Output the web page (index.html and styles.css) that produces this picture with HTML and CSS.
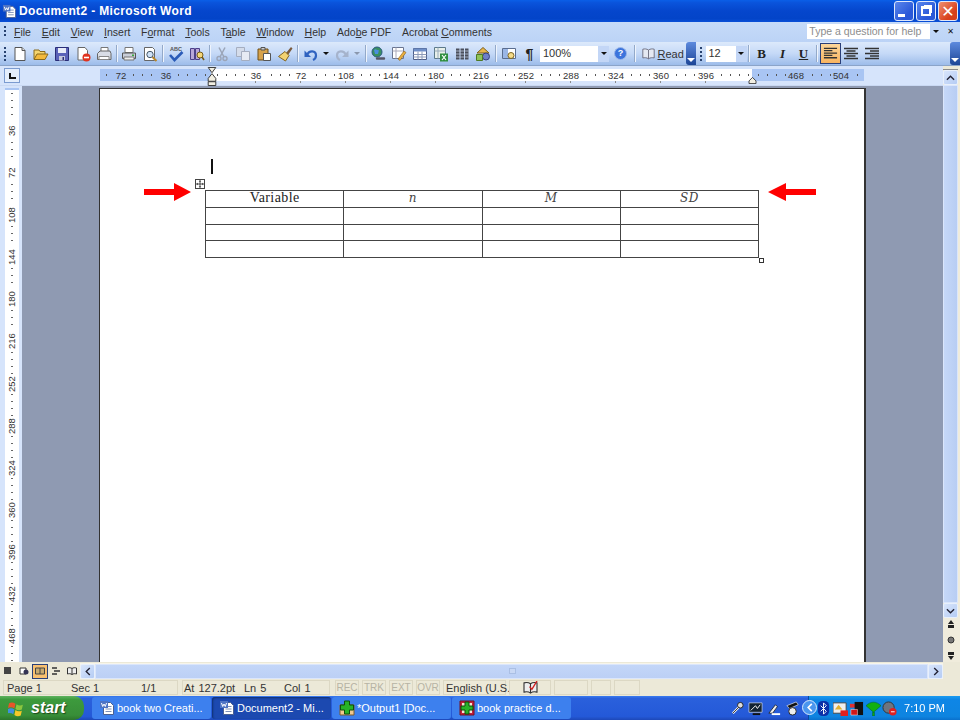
FILE: index.html
```html
<!DOCTYPE html>
<html lang="en">
<head>
  <meta charset="UTF-8" />
  <title>Document2 - Microsoft Word</title>
  <link rel="stylesheet" href="styles.css">
</head>
<body>
  <svg class="sprite" width="0" height="0">
    <symbol id="i-doc" viewBox="0 0 16 16"><path d="M3 1.500h7l3 3v10H3z" fill="#fff" stroke="#555"/><path d="M10 1.500v3h3" fill="#ddd" stroke="#555"/></symbol>
    <symbol id="i-open" viewBox="0 0 16 16"><path d="M1 13V4h5l1 1.500h5V8" fill="#f6d66f" stroke="#8a6a1c"/><path d="M1 13.500 4 8h11l-3 5.500z" fill="#f3b93c" stroke="#8a6a1c"/></symbol>
    <symbol id="i-save" viewBox="0 0 16 16"><path d="M1.500 1.500h13v13h-13z" fill="#5a62b8" stroke="#2a2e78"/><path d="M4 2h8v5H4z" fill="#e8ecf8"/><path d="M5 10h6v4.500H5z" fill="#c4c8dc"/><path d="M8.500 11h1.500v3H8.500z" fill="#2a2e78"/></symbol>
    <symbol id="i-perm" viewBox="0 0 16 16"><path d="M3 1.500h7l2.500 3V14H3z" fill="#fff" stroke="#666"/><circle cx="11.500" cy="11.500" r="4" fill="#e0331f"/><path d="M9 11.500h5" stroke="#fff" stroke-width="1.600"/></symbol>
    <symbol id="i-mail" viewBox="0 0 16 16"><path d="M5 1.500h7v5H5z" fill="#fff" stroke="#777"/><path d="M1.500 7.500 4 5h10l1 2.500v6h-13.500z" fill="#d9dde6" stroke="#666"/><path d="M3 10.500h10v3H3z" fill="#fff" stroke="#888"/></symbol>
    <symbol id="i-print" viewBox="0 0 16 16"><path d="M4 1.500h8v5H4z" fill="#fff" stroke="#777"/><path d="M1.500 7h13v5.500h-13z" fill="#c9ced9" stroke="#555"/><path d="M3 11h10v3H3z" fill="#eee" stroke="#777"/><path d="M11 8.500h2v1.500h-2z" fill="#3aa83a"/></symbol>
    <symbol id="i-preview" viewBox="0 0 16 16"><path d="M2.500 1.500h8l2 2v11H2.500z" fill="#fff" stroke="#666"/><circle cx="8" cy="8.500" r="3.200" fill="#cfe2f7" stroke="#456"/><path d="m10.500 11 4 4" stroke="#b8862a" stroke-width="2"/></symbol>
    <symbol id="i-research" viewBox="0 0 16 16"><path d="M1.500 2.500h4v11h-4zM6.500 2.500h4v11h-4z" fill="#b9a6d8" stroke="#4d3f88"/><circle cx="11" cy="9" r="3" fill="#f5d77a" stroke="#765c18"/><path d="m13 11 2 3" stroke="#765c18" stroke-width="1.600"/></symbol>
    <symbol id="i-cut" viewBox="0 0 16 16"><path d="M5 1.500 10 11M11 1.500 6 11" stroke="#9ba5b8" stroke-width="1.500"/><circle cx="5" cy="12.500" r="2" fill="none" stroke="#9ba5b8" stroke-width="1.400"/><circle cx="11" cy="12.500" r="2" fill="none" stroke="#9ba5b8" stroke-width="1.400"/></symbol>
    <symbol id="i-copy" viewBox="0 0 16 16"><path d="M1.500 1.500h8v9h-8z" fill="#d4dcea" stroke="#a5aec0"/><path d="M6.500 5.500h8v9h-8z" fill="#e6ebf4" stroke="#a5aec0"/></symbol>
    <symbol id="i-paste" viewBox="0 0 16 16"><path d="M2 3h10v11H2z" fill="#d6a24c" stroke="#6e4e17"/><path d="M5 1.500h4V4H5z" fill="#ccc" stroke="#555"/><path d="M7.500 7.500h7v7h-7z" fill="#fff" stroke="#555"/></symbol>
    <symbol id="i-brush" viewBox="0 0 16 16"><path d="m9 7 5-6 1.500 1.500L11 9z" fill="#7a5a3c"/><path d="M1.500 10.500 8 5.500l4 4-3.500 5.500z" fill="#f2d272" stroke="#826420"/></symbol>
    <symbol id="i-undo" viewBox="0 0 16 16"><path d="M4 9c2-5 9-5 9 .5 0 2-1 3.500-3 4.500" fill="none" stroke="#2f62c0" stroke-width="2.200"/><path d="M1.500 4.500v6.500h6.500z" fill="#2f62c0"/></symbol>
    <symbol id="i-redo" viewBox="0 0 16 16"><path d="M12 9C10 4 3 4 3 9.500c0 2 1 3.500 3 4.500" fill="none" stroke="#a5b3cc" stroke-width="2.200"/><path d="M14.500 4.500v6.500H8z" fill="#a5b3cc"/></symbol>
    <symbol id="i-link" viewBox="0 0 16 16"><circle cx="7" cy="6" r="5" fill="#3a8f60" stroke="#2c5a80"/><path d="M4 4c2-2 3 1 5 0l-1 4-3 0z" fill="#4b8fe0"/><path d="M7 12.500h3M11 12.500h3" stroke="#556" stroke-width="2.400" stroke-linecap="round"/></symbol>
    <symbol id="i-borders" viewBox="0 0 16 16"><path d="M1.500 1.500h11v11h-11z" fill="#fff" stroke="#6a7590"/><path d="M1.500 5h11M5 1.500v11" stroke="#aab"/><path d="m7 13 6-8 2 1.500-6 8z" fill="#e8b040" stroke="#8a5a18" stroke-width=".6"/></symbol>
    <symbol id="i-table" viewBox="0 0 16 16"><path d="M1.500 2.500h13v11h-13z" fill="#fff" stroke="#4d5e88"/><path d="M1.500 2.500h13v3h-13z" fill="#6f8fc8"/><path d="M1.500 8.500h13M1.500 11h13M6 5.500v8M10 5.500v8" stroke="#8c9ab8"/></symbol>
    <symbol id="i-excel" viewBox="0 0 16 16"><path d="M1.500 1.500h11v11h-11z" fill="#e8f0ea" stroke="#5d7a8a"/><path d="M1.500 5h11M5 1.500v11" stroke="#9ab"/><path d="M7 7.500h8v8H7z" fill="#2f8f3f"/><path d="m9 9 4 5M13 9l-4 5" stroke="#fff" stroke-width="1.200"/></symbol>
    <symbol id="i-cols" viewBox="0 0 16 16"><path d="M2 2.500h3.500v11H2zM6.500 2.500H10v11H6.500zM11 2.500h3.500v11H11z" fill="#4a4f5c"/><path d="M2 5h12.500M2 8h12.500M2 11h12.500" stroke="#cdd8ee" stroke-width=".7"/></symbol>
    <symbol id="i-draw" viewBox="0 0 16 16"><path d="M8 1.500 14 7H2z" fill="#e8b64a" stroke="#7d5f1d"/><circle cx="11" cy="10.500" r="3.500" fill="#6f80c8" stroke="#364080"/><path d="M1.500 8.500h6v6h-6z" fill="#8fc35a" stroke="#4f7a24"/></symbol>
    <symbol id="i-map" viewBox="0 0 16 16"><path d="M1.500 2.500h13v10h-13z" fill="#fff" stroke="#5a6d8e"/><path d="M2 3h5v9H2z" fill="#9ab6e6"/><circle cx="10" cy="9.500" r="3" fill="#f5dc8a" stroke="#7d6420"/></symbol>
    <symbol id="i-book" viewBox="0 0 16 16"><path d="M8 3.500C6 2 3.500 2 1.500 2.500v10c2-.5 4.500-.5 6.500 1 2-1.500 4.500-1.500 6.500-1v-10C12.500 2 10 2 8 3.500zM8 3.500v10" fill="#e5e9f2" stroke="#667"/></symbol>
    <symbol id="i-al" viewBox="0 0 16 16"><path d="M1 2.500h14M1 5h9M1 7.500h14M1 10h9M1 12.500h14" stroke="#333" stroke-width="1.400"/></symbol>
    <symbol id="i-ac" viewBox="0 0 16 16"><path d="M1 2.500h14M3.500 5h9M1 7.500h14M3.500 10h9M1 12.500h14" stroke="#333" stroke-width="1.400"/></symbol>
    <symbol id="i-ar" viewBox="0 0 16 16"><path d="M1 2.500h14M6 5h9M1 7.500h14M6 10h9M1 12.500h14" stroke="#333" stroke-width="1.400"/></symbol>
    <symbol id="i-word" viewBox="0 0 16 16"><path d="M4.500 2.500h7l3 3v9h-10z" fill="#fff" stroke="#4a5f90"/><path d="M6.500 6.500h6M6.500 9h6M6.500 11.500h6" stroke="#7d90b8"/><path d="M1 1h8v7H1z" fill="#4e74c4"/><path d="m2.500 3 1.200 3.500L5 4l1.300 2.500L7.500 3" fill="none" stroke="#fff"/></symbol>
    <symbol id="i-plus" viewBox="0 0 16 16"><path d="M1 5h14v10H1z" fill="#f0c890" stroke="#7a5a2c"/><path d="M5.500 1h5v4h4v5h-4v4h-5v-4h-4V5h4z" fill="#27b327" stroke="#0d4f0d"/></symbol>
    <symbol id="i-plusred" viewBox="0 0 16 16"><path d="M1 1h14v14H1z" fill="#c81f3c" stroke="#701020"/><path d="M3 3h10v10H3z" fill="#f2e8d8"/><path d="M6 2h4v4h4v4h-4v4H6v-4H2V6h4z" fill="#27b327" stroke="#0d4f0d"/></symbol>
  </svg>

  <div class="screen">
    <header class="titlebar">
      <svg class="title-icon"><use href="#i-word"/></svg>
      <span class="title-text">Document2 - Microsoft Word</span>
      <div class="win-btns">
        <span class="win-btn"><i class="win-min"></i></span>
        <span class="win-btn"><i class="win-max"></i></span>
        <span class="win-btn win-close">&#x2715;</span>
      </div>
    </header>

    <nav class="menubar">
      <span class="grip"></span>
      <ul class="menu">
        <li><u>F</u>ile</li>
        <li><u>E</u>dit</li>
        <li><u>V</u>iew</li>
        <li><u>I</u>nsert</li>
        <li>F<u>o</u>rmat</li>
        <li><u>T</u>ools</li>
        <li>T<u>a</u>ble</li>
        <li><u>W</u>indow</li>
        <li><u>H</u>elp</li>
        <li>Ado<u>b</u>e PDF</li>
        <li>Acrobat <u>C</u>omments</li>
      </ul>
      <div class="helpbox">Type a question for help</div>
      <span class="arrow-down help-arrow"></span>
      <span class="doc-close">&#x2715;</span>
    </nav>

    <div class="toolbar">
      <span class="grip"></span>
      <svg class="tb"><use href="#i-doc"/></svg>
      <svg class="tb"><use href="#i-open"/></svg>
      <svg class="tb"><use href="#i-save"/></svg>
      <svg class="tb"><use href="#i-perm"/></svg>
      <svg class="tb"><use href="#i-mail"/></svg>
      <span class="sep"></span>
      <svg class="tb"><use href="#i-print"/></svg>
      <svg class="tb"><use href="#i-preview"/></svg>
      <span class="sep"></span>
      <svg class="tb" viewBox="0 0 16 16"><path d="m2 9 4.500 5L14.500 6" fill="none" stroke="#2a5bb8" stroke-width="2.600"/><text x="8" y="5" text-anchor="middle" font-family="Liberation Sans" font-size="5.500" font-weight="bold" fill="#555">ABC</text></svg>
      <svg class="tb"><use href="#i-research"/></svg>
      <span class="sep"></span>
      <svg class="tb"><use href="#i-cut"/></svg>
      <svg class="tb"><use href="#i-copy"/></svg>
      <svg class="tb"><use href="#i-paste"/></svg>
      <svg class="tb"><use href="#i-brush"/></svg>
      <span class="sep"></span>
      <svg class="tb"><use href="#i-undo"/></svg>
      <span class="arrow-down tb-arrow"></span>
      <svg class="tb"><use href="#i-redo"/></svg>
      <span class="arrow-down tb-arrow off"></span>
      <span class="sep"></span>
      <svg class="tb"><use href="#i-link"/></svg>
      <svg class="tb"><use href="#i-borders"/></svg>
      <svg class="tb"><use href="#i-table"/></svg>
      <svg class="tb"><use href="#i-excel"/></svg>
      <svg class="tb"><use href="#i-cols"/></svg>
      <svg class="tb"><use href="#i-draw"/></svg>
      <span class="sep"></span>
      <svg class="tb"><use href="#i-map"/></svg>
      <span class="pilcrow">&para;</span>
      <div class="combo zoom-combo"><span>100%</span><b><i class="arrow-down"></i></b></div>
      <span class="help-btn">?</span>
      <span class="sep"></span>
      <span class="read"><svg class="read-ico"><use href="#i-book"/></svg><span><u>R</u>ead</span></span>
      <span class="chevron"><i class="arrow-down"></i></span>
      <span class="grip grip-2"></span>
      <div class="combo size-combo"><span>12</span><b><i class="arrow-down"></i></b></div>
      <span class="sep"></span>
      <span class="fmt fmt-b">B</span>
      <span class="fmt fmt-i">I</span>
      <span class="fmt fmt-u">U</span>
      <span class="sep"></span>
      <span class="align-on"><svg class="al"><use href="#i-al"/></svg></span>
      <svg class="tb"><use href="#i-ac"/></svg>
      <svg class="tb"><use href="#i-ar"/></svg>
      <span class="chevron chevron-end"><i class="arrow-down"></i></span>
    </div>

    <div class="ruler-row">
      <div class="tab-stop"><i></i></div>
      <div class="hruler">
        <div class="hruler-band">
          <div class="zone zone-left">
            <span class="cell"><b>72</b></span>
            <span class="cell"><b>36</b></span>
          </div>
          <div class="zone zone-mid">
            <span class="cell"><b>36</b></span>
            <span class="cell"><b>72</b></span>
            <span class="cell"><b>108</b></span>
            <span class="cell"><b>144</b></span>
            <span class="cell"><b>180</b></span>
            <span class="cell"><b>216</b></span>
            <span class="cell"><b>252</b></span>
            <span class="cell"><b>288</b></span>
            <span class="cell"><b>324</b></span>
            <span class="cell"><b>360</b></span>
            <span class="cell"><b>396</b></span>
          </div>
          <div class="zone zone-right">
            <span class="cell"><b>468</b></span>
            <span class="cell"><b>504</b></span>
          </div>
        </div>
        <div class="hruler-ticks"></div>
        <svg class="indent indent-l" viewBox="0 0 10 20"><path d="M1 .5h8L5 6zM5 7l4 5v3H1v-3z" fill="#f2efe2" stroke="#333"/><path d="M1 15.500h8v4H1z" fill="#f2efe2" stroke="#333"/></svg>
        <svg class="indent indent-r" viewBox="0 0 10 8"><path d="m5 .5 4 4v3H1v-3z" fill="#f2efe2" stroke="#333"/></svg>
      </div>
    </div>

    <div class="main">
      <div class="vruler">
        <div class="vruler-band">
          <span>36</span><span>72</span><span>108</span><span>144</span><span>180</span><span>216</span><span>252</span><span>288</span><span>324</span><span>360</span><span>396</span><span>432</span><span>468</span>
        </div>
      </div>
      <div class="workspace">
        <div class="page">
          <div class="caret"></div>
          <div class="table-wrap">
            <span class="move-handle"><svg viewBox="0 0 10 10"><path d="M5 1v8M1 5h8" stroke="#222"/><path d="m5 0 1.500 2h-3zM5 10l1.500-2h-3zM0 5l2-1.500v3zM10 5 8 3.500v3z" fill="#222"/></svg></span>
            <table class="doc-table">
              <tr><th>Variable</th><th class="stat">n</th><th class="stat">M</th><th class="stat">SD</th></tr>
              <tr><td></td><td></td><td></td><td></td></tr>
              <tr><td></td><td></td><td></td><td></td></tr>
              <tr><td></td><td></td><td></td><td></td></tr>
            </table>
            <span class="resize-handle"></span>
          </div>
          <svg class="red-arrow arrow-l" viewBox="0 0 48 18"><path d="M0 6h30V0l17 9-17 9v-6H0z" fill="#f00"/></svg>
          <svg class="red-arrow arrow-r" viewBox="0 0 48 18"><path d="M48 6H18V0L0 9l18 9v-6h30z" fill="#f00"/></svg>
        </div>
      </div>
      <aside class="vscroll">
        <span class="split"></span>
        <span class="sb-btn"><svg viewBox="0 0 10 6"><path d="m1 5 4-4 4 4" fill="none" stroke="#223" stroke-width="1.500"/></svg></span>
        <span class="sb-track"></span>
        <span class="sb-btn"><svg viewBox="0 0 10 6"><path d="m1 1 4 4 4-4" fill="none" stroke="#223" stroke-width="1.500"/></svg></span>
        <div class="browse">
          <svg viewBox="0 0 8 10"><path d="m4 0 3 4H1zM1 5h6v3H1z" fill="#222"/></svg>
          <svg viewBox="0 0 8 10"><circle cx="4" cy="5" r="3" fill="#777" stroke="#333"/></svg>
          <svg viewBox="0 0 8 10"><path d="M1 2h6v3H1zM1 6h6l-3 4z" fill="#222"/></svg>
        </div>
      </aside>
    </div>

    <div class="hscroll">
      <div class="views">
        <span class="view"><svg viewBox="0 0 10 10"><path d="M1 1h7v7H1z" fill="#444"/></svg></span>
        <span class="view"><svg viewBox="0 0 10 10"><path d="M1 2h6v6H1z" fill="#fff" stroke="#333"/><circle cx="7" cy="6" r="2.500" fill="#335"/></svg></span>
        <span class="view view-on"><svg viewBox="0 0 10 10"><path d="M.5 2h9v6h-9z" fill="#c9ab70" stroke="#444"/><path d="M5 2v6" stroke="#444"/></svg></span>
        <span class="view"><svg viewBox="0 0 10 10"><path d="M1 2h5M3 5h6M1 8h5" stroke="#333" stroke-width="1.400"/></svg></span>
        <span class="view"><svg viewBox="0 0 10 10"><path d="M5 2.500C3.500 1.500 2 1.500 .5 2v6c1.500-.5 3-.5 4.500.5 1.500-1 3-1 4.500-.5V2C8 1.500 6.500 1.500 5 2.500zM5 2.500v6" fill="#eee" stroke="#333"/></svg></span>
      </div>
      <span class="sb-btn h"><svg viewBox="0 0 6 10"><path d="M5 1 1 5l4 4" fill="none" stroke="#223" stroke-width="1.500"/></svg></span>
      <span class="h-track"><i></i></span>
      <span class="sb-btn h"><svg viewBox="0 0 6 10"><path d="m1 1 4 4-4 4" fill="none" stroke="#223" stroke-width="1.500"/></svg></span>
      <span class="h-end"></span>
    </div>

    <div class="statusbar">
      <div class="st st-page"><span>Page 1</span><span>Sec 1</span><span>1/1</span></div>
      <div class="st st-pos"><span>At 127.2pt</span><span>Ln 5</span><span>Col 1</span></div>
      <div class="st st-mode">REC</div>
      <div class="st st-mode">TRK</div>
      <div class="st st-mode">EXT</div>
      <div class="st st-mode">OVR</div>
      <div class="st st-lang">English (U.S.</div>
      <div class="st st-spell"><svg viewBox="0 0 16 14"><path d="M8 3C6 1.500 3 1.500 1 2v10c2-.5 5-.5 7 1 2-1.500 5-1.500 7-1V2c-2-.5-5-.5-7 1zM8 3v10" fill="#eee" stroke="#333" stroke-width="1.200"/><path d="m7 6 2.500 3L15 0" fill="none" stroke="#d02020" stroke-width="1.500"/></svg></div>
      <div class="st st-e1"></div>
      <div class="st st-e2"></div>
      <div class="st st-e3"></div>
    </div>

    <footer class="taskbar">
      <div class="start">
        <svg class="flag" viewBox="0 0 16 16"><path d="M1 3c2-1 4-1 6 .5L6 8C4 6.500 2 6.500 0 7.500z" fill="#e8552a"/><path d="M8 4c2 1.500 4 1.500 6 .5L13 9c-2 1-4 1-6-.5z" fill="#8cc63f"/><path d="M0 8.500c2-1 4-1 6 .5l-1 4.500c-2-1.500-4-1.500-6-.5z" fill="#3f8fe0"/><path d="M7 9.500c2 1.500 4 1.500 6 .5l-1 4.500c-2 1-4 1-6-.5z" fill="#f7c928"/></svg>
        <span>start</span>
      </div>
      <div class="tasks">
        <div class="task"><svg><use href="#i-word"/></svg><span>book two Creati...</span></div>
        <div class="task task-on"><svg><use href="#i-word"/></svg><span>Document2 - Mi...</span></div>
        <div class="task"><svg><use href="#i-plus"/></svg><span>*Output1 [Doc...</span></div>
        <div class="task"><svg><use href="#i-plusred"/></svg><span>book practice d...</span></div>
      </div>
      <div class="quick">
        <svg viewBox="0 0 16 16"><path d="m3 13 7-7" stroke="#eee" stroke-width="2.400"/><path d="m3 13 7-7" stroke="#333" stroke-width="1"/><circle cx="11" cy="4.500" r="3" fill="#ddd" stroke="#222"/></svg>
        <svg viewBox="0 0 16 16"><path d="M1 2h14v10H1z" fill="#123" stroke="#fff" stroke-width=".6"/><path d="M3 10 8 5l2 3 3-4" fill="none" stroke="#fff"/><path d="M5 14h8" stroke="#111" stroke-width="2"/></svg>
        <svg viewBox="0 0 16 16"><path d="m2 13 7-9 2 2-5 7z" fill="#eee" stroke="#111" stroke-width=".8"/><path d="M5 14h9" stroke="#fff" stroke-width="2"/></svg>
        <svg viewBox="0 0 16 16"><path d="M2 5 12 1l2 3L5 8z" fill="#111" stroke="#eee" stroke-width=".7"/><circle cx="8" cy="11" r="4" fill="#eee" stroke="#222"/></svg>
      </div>
      <div class="tray">
        <span class="tray-toggle"><svg viewBox="0 0 6 10"><path d="M5 1 1 5l4 4" fill="none" stroke="#fff" stroke-width="1.800"/></svg></span>
        <svg viewBox="0 0 16 16"><rect x="2" width="12" height="16" rx="5" fill="#0a2fa8"/><path d="m5 5 6 6-3 3V2l3 3-6 6" fill="none" stroke="#fff"/></svg>
        <svg viewBox="0 0 16 16"><path d="M0 2h14v11H0z" fill="#eee" stroke="#444"/><path d="M2 9 6 4l4 5z" fill="#e0b030"/><path d="M8 10h8v6H8z" fill="#e02020"/></svg>
        <svg viewBox="0 0 16 16"><path d="M1 3h9v4H1z" fill="#e03030"/><path d="M6 1h9v14H6z" fill="#111"/><path d="M2 9h7v6H2z" fill="#d01818" stroke="#fff" stroke-width=".5"/></svg>
        <svg viewBox="0 0 16 16"><path d="M0 5c5-5 11-5 16 0l-8 7zM7 12h2v4H7z" fill="#12b012" stroke="#063" stroke-width=".6"/></svg>
        <svg viewBox="0 0 16 16"><circle cx="7" cy="7" r="6" fill="#6e7480" stroke="#333"/><circle cx="11.500" cy="11.500" r="4" fill="#e02020"/><path d="M9.500 11.500h4" stroke="#fff"/></svg>
        <span class="clock">7:10 PM</span>
      </div>
    </footer>
  </div>
</body>
</html>
```

FILE: styles.css
```css
* {
  box-sizing: border-box;
}

html, body {
  margin: 0;
  padding: 0;
  background: #fff;
}

.sprite {
  position: absolute;
}

.screen {
  width: 960px;
  height: 720px;
  overflow: hidden;
  display: flex;
  flex-direction: column;
  font-family: "Liberation Sans", Arial, sans-serif;
  font-size: 11px;
  color: #222;
  filter: blur(0.35px);
}

/* title bar */
.titlebar {
  height: 22px;
  display: flex;
  align-items: center;
  padding: 0 2px;
  background: linear-gradient(#0a5fe8 0%, #0a54dc 12%, #0546cc 50%, #0344c8 85%, #0a50d8 100%);
}

.title-icon {
  width: 15px;
  height: 15px;
  margin-right: 2px;
}

.title-text {
  font-weight: bold;
  font-size: 12px;
  color: #fff;
  letter-spacing: 0.35px;
}

.win-btns {
  margin-left: auto;
  display: flex;
  gap: 2px;
}

.win-btn {
  width: 20px;
  height: 20px;
  border: 1px solid #dfe8fa;
  border-radius: 3px;
  background: linear-gradient(135deg, #5a86ec, #2a58d8 70%);
  display: flex;
  align-items: center;
  justify-content: center;
  color: #fff;
}

.win-min {
  width: 7px;
  height: 3px;
  background: #fff;
  margin: 9px 6px 0 0;
}

.win-max {
  width: 10px;
  height: 10px;
  border: 2px solid #fff;
  border-top-width: 3px;
  box-shadow: 2px -2px 0 -1px #fff;
}

.win-close {
  background: linear-gradient(135deg, #f09070, #d8401c 70%);
  font-size: 16px;
  font-weight: bold;
  font-family: "DejaVu Sans", sans-serif;
}

/* menu */
.menubar {
  height: 20px;
  display: flex;
  align-items: center;
  background: linear-gradient(#c6dbf8, #bcd3f6);
  padding: 0 0 1px 4px;
  font-size: 10.500px;
}

.grip {
  width: 2px;
  height: 12px;
  flex: none;
  background: repeating-linear-gradient(#27416f 0 2px, transparent 2px 4px);
}

.menu {
  list-style: none;
  display: flex;
  margin: 0;
  padding: 0 0 0 8px;
  gap: 10.800px;
  color: #333;
  white-space: nowrap;
}

.helpbox {
  margin-left: auto;
  width: 123px;
  height: 15px;
  background: #fff;
  color: #8d8d8d;
  line-height: 14px;
  padding-left: 2px;
  white-space: nowrap;
}

.arrow-down {
  display: inline-block;
  width: 0;
  height: 0;
  border: 3px solid transparent;
  border-top: 3px solid #111;
  border-bottom: 0;
}

.help-arrow {
  margin-left: 3px;
}

.doc-close {
  margin: 0 6px 0 8px;
  font-size: 8px;
  font-weight: bold;
  color: #111;
  font-family: "DejaVu Sans", sans-serif;
}

/* standard + formatting toolbar, they share one row */
.toolbar {
  height: 24px;
  display: flex;
  align-items: center;
  padding-left: 4px;
  background: linear-gradient(#dce9fb 0%, #c5d9f7 50%, #9dbcea 100%);
  border-bottom: 1px solid #8ba4c9;
}

.tb {
  width: 16px;
  height: 16px;
  margin: 0 2.500px;
  flex: none;
}

.toolbar > .grip {
  margin-right: 3px;
  height: 14px;
}

.toolbar > .grip-2 {
  margin: 0 4px;
}

.sep {
  width: 1px;
  height: 17px;
  flex: none;
  margin: 0 2px 0 1.500px;
  background: #93a9c9;
  box-shadow: 1px 0 0 #eef4fd;
}

.tb-arrow {
  margin: 0 2px 0 2px;
  flex: none;
}

.tb-arrow.off {
  border-top-color: #8a97ad;
  margin-right: 3px;
}

.pilcrow {
  width: 21px;
  text-align: center;
  font-size: 14px;
  font-weight: bold;
  color: #222;
  flex: none;
}

.combo {
  display: flex;
  height: 16px;
  background: #fff;
  flex: none;
  line-height: 15px;
  padding-left: 3px;
  color: #333;
}

.combo b {
  width: 11px;
  margin-left: auto;
  background: #c3d6f6;
  display: flex;
  align-items: center;
  justify-content: center;
}

.zoom-combo {
  width: 69px;
}

.size-combo {
  width: 41px;
}

.help-btn {
  width: 13px;
  height: 13px;
  margin: 0 5px;
  flex: none;
  border-radius: 50%;
  background: #3c74dc;
  border: 1px solid #9ab6e8;
  color: #fff;
  font-size: 9px;
  font-weight: bold;
  line-height: 11px;
  text-align: center;
}

.read {
  display: flex;
  align-items: center;
  gap: 2px;
  width: 49px;
  padding-left: 4px;
  flex: none;
  color: #333;
}

.read-ico {
  width: 15px;
  height: 14px;
  flex: none;
}

.chevron {
  width: 10px;
  height: 23px;
  flex: none;
  background: linear-gradient(#5d8ade, #1c4596);
  border-radius: 3px 0 0 3px;
  display: flex;
  align-items: flex-end;
  justify-content: center;
  padding-bottom: 3px;
}

.chevron .arrow-down {
  border-top-color: #fff;
  border-left-width: 4px;
  border-right-width: 4px;
  border-top-width: 4px;
}

.chevron-end {
  margin-left: auto;
}

.fmt {
  width: 21px;
  flex: none;
  text-align: center;
  font-family: "Liberation Serif", serif;
  font-size: 13px;
  font-weight: bold;
  color: #222;
}

.fmt-i {
  font-style: italic;
}

.fmt-u {
  text-decoration: underline;
}

.align-on {
  width: 21px;
  height: 21px;
  margin-left: 1px;
  flex: none;
  border: 1px solid #2a3f78;
  background: linear-gradient(#fcd69a, #f8b460);
  display: flex;
  align-items: center;
  justify-content: center;
}

.al {
  width: 15px;
  height: 15px;
}

/* rulers */
.ruler-row {
  height: 20px;
  display: flex;
  background: #d6e4fb;
  border-bottom: 1px solid #c9d8f2;
  padding-left: 4px;
}

.tab-stop {
  width: 16px;
  height: 15px;
  margin-top: 2px;
  border: 1px solid #7b9bd0;
  background: #e4eefc;
  flex: none;
  display: flex;
  align-items: center;
  justify-content: center;
}

.tab-stop i {
  width: 7px;
  height: 6px;
  border-left: 2px solid #111;
  border-bottom: 2px solid #111;
}

.hruler {
  position: relative;
  margin-left: 80px;
  width: 764px;
  padding-top: 3px;
}

.hruler-band {
  height: 12px;
  display: flex;
  font-size: 9.500px;
  line-height: 13px;
  color: #333;
}

.zone {
  display: flex;
  height: 12px;
  background-image: radial-gradient(circle, #555 0.6px, transparent 1px);
  background-size: 9px 12px;
  background-position: 2px 0;
  overflow: hidden;
}

.zone-left {
  width: 111px;
  background-color: #a9c5f3;
}

.zone-mid {
  width: 541px;
  padding-left: 22.500px;
  background-color: #fff;
}

.zone-right {
  width: 112px;
  padding-left: 21.500px;
  background-color: #a9c5f3;
}

.zone-left .cell:first-child {
  margin-left: -1.500px;
}

.cell {
  width: 45px;
  flex: none;
  text-align: center;
}

.cell b {
  font-weight: normal;
  padding: 0 2px;
}

.zone-left b, .zone-right b {
  background: #a9c5f3;
}

.zone-mid b {
  background: #fff;
}

.hruler-ticks {
  height: 2px;
  margin-left: 111px;
  width: 500px;
  background: repeating-linear-gradient(90deg, transparent 0 44px, #8a8a8a 44px 45px);
}

.indent {
  position: absolute;
}

.indent-l {
  left: 107px;
  top: 1px;
  width: 10px;
  height: 19px;
}

.indent-r {
  left: 648px;
  top: 11px;
  width: 9px;
  height: 7px;
}

.main {
  flex: 1;
  min-height: 0;
  display: flex;
}

.vruler {
  width: 22px;
  flex: none;
  background: #d6e4fb;
  padding: 2px 3px 0 5px;
}

.vruler-band {
  height: 100%;
  overflow: hidden;
  background-color: #fff;
  border-top: 2px solid #a9c5f3;
  background-image: radial-gradient(circle, #666 0.6px, transparent 1px);
  background-size: 14px 7px;
  color: #333;
  font-size: 9.500px;
  display: flex;
  flex-direction: column;
  align-items: center;
  padding-top: 31px;
}

.vruler-band span {
  height: 20px;
  width: 14px;
  margin-bottom: 22.100px;
  flex: none;
  background: #fff;
  writing-mode: vertical-rl;
  transform: rotate(180deg);
  display: flex;
  align-items: center;
  justify-content: center;
  line-height: 14px;
}

.workspace {
  flex: 1;
  min-width: 0;
  background: #8f9ab2;
  padding: 2px 0 0 77px;
}

.page {
  position: relative;
  width: 767px;
  height: 100%;
  background: #fff;
  border: 1px solid #333;
  border-width: 1px 2px 0 1px;
  padding: 70px 0 0 105px;
}

.caret {
  width: 2px;
  height: 15px;
  background: #111;
  margin-left: 6px;
}

.table-wrap {
  position: relative;
  width: 555px;
  margin-top: 16px;
}

.doc-table {
  border-collapse: collapse;
  table-layout: fixed;
  width: 554px;
  font-family: "Liberation Serif", serif;
  font-size: 14px;
  line-height: 14px;
  color: #222;
}

.doc-table th, .doc-table td {
  border: 1px solid #444;
  height: 16.700px;
  padding: 0 0 2px;
  font-weight: normal;
  text-align: center;
  letter-spacing: 0.4px;
}

.doc-table .stat {
  font-style: italic;
  font-family: "DejaVu Serif", serif;
  font-size: 12px;
  color: #444;
}

.move-handle {
  position: absolute;
  left: -10px;
  top: -11px;
  width: 10px;
  height: 10px;
  border: 1px solid #444;
  background: #fff;
  display: flex;
}

.move-handle svg {
  width: 8px;
  height: 8px;
}

.resize-handle {
  position: absolute;
  right: -4px;
  bottom: -5px;
  width: 5px;
  height: 5px;
  border: 1px solid #333;
  background: #fff;
}

.red-arrow {
  position: absolute;
  width: 48px;
  height: 18px;
}

.arrow-l {
  left: 44px;
  top: 94px;
}

.arrow-r {
  left: 668px;
  top: 94px;
}

/* scrollbars */
.vscroll {
  margin-top: -20px;
  width: 17px;
  flex: none;
  display: flex;
  flex-direction: column;
  align-items: flex-start;
  background: #f0ecdc;
  position: relative;
}

.split {
  height: 4px;
  width: 15px;
  background: #ece9d8;
  border-bottom: 1px solid #8a8a8a;
  flex: none;
}

.sb-btn {
  width: 15px;
  height: 15px;
  flex: none;
  background: linear-gradient(135deg, #d8e5fb, #b5ccf4);
  border: 1px solid #e8f0fc;
  border-radius: 2px;
  display: flex;
  align-items: center;
  justify-content: center;
}

.sb-btn svg {
  width: 9px;
  height: 6px;
}

.sb-btn.h svg {
  width: 6px;
  height: 9px;
}

.sb-track {
  flex: 1;
  width: 15px;
  background: linear-gradient(90deg, #c6d8f8, #b8cdf3);
  border: 1px solid #dbe6fb;
}

.browse {
  height: 44px;
  width: 15px;
  flex: none;
  display: flex;
  flex-direction: column;
  align-items: center;
  justify-content: space-around;
}

.browse svg {
  width: 8px;
  height: 10px;
}

.hscroll {
  height: 17px;
  display: flex;
  align-items: center;
  background: #f7f5ea;
  border-top: 1px solid #ece9d8;
}

.views {
  width: 80px;
  flex: none;
  display: flex;
  align-items: center;
  background: #ece9d8;
  height: 16px;
}

.view {
  width: 16px;
  height: 15px;
  flex: none;
  display: flex;
  align-items: center;
  justify-content: center;
}

.view svg {
  width: 10px;
  height: 10px;
}

.view-on {
  background: #f8c070;
  border: 1px solid #2a3f78;
}

.h-track {
  flex: 1;
  height: 15px;
  background: linear-gradient(#c3d6f8, #bcd0f5);
  border: 1px solid #dbe6fb;
  display: flex;
  align-items: center;
  justify-content: center;
}

.h-track i {
  width: 7px;
  height: 6px;
  background: #c9d8f4;
  border: 1px solid #aabfe4;
  margin-left: 2px;
}

.h-end {
  width: 17px;
  height: 16px;
  flex: none;
  background: #ece9d8;
}

.statusbar {
  height: 17px;
  display: flex;
  gap: 3px;
  padding: 1px 0 0 3px;
  background: #ece9d8;
  color: #333;
  line-height: 14px;
}

.st {
  height: 15px;
  border: 1px solid #dcd8c4;
  flex: none;
  white-space: nowrap;
  display: flex;
}

.st-page {
  width: 175px;
  padding-left: 3px;
  margin-right: 1px;
}

.st-page span:nth-child(1) { width: 64px; }
.st-page span:nth-child(2) { width: 70px; }

.st-pos {
  width: 148px;
  padding-left: 1px;
  margin-right: 2px;
  word-spacing: 1px;
}

.st-pos span:nth-child(1) { width: 60px; }
.st-pos span:nth-child(2) { width: 40px; }

.st-mode {
  width: 24px;
  color: #b6b3a4;
  justify-content: center;
  font-size: 10px;
}

.st-lang {
  width: 63px;
  padding-left: 2px;
}

.st-spell {
  width: 42px;
  justify-content: center;
}

.st-spell svg {
  width: 15px;
  height: 13px;
}

.st-e1 { width: 34px; }
.st-e2 { width: 20px; }
.st-e3 { width: 26px; }

.taskbar {
  height: 24px;
  flex: none;
  display: flex;
  align-items: stretch;
  background: linear-gradient(#3a7cf0 0%, #2a60dc 10%, #2459d8 85%, #1d48b8 100%);
  color: #fff;
}

.start {
  width: 84px;
  flex: none;
  display: flex;
  align-items: center;
  padding-left: 8px;
  gap: 6px;
  background: linear-gradient(#5fb35f 0%, #3d9a3d 15%, #388e38 80%, #2c752c 100%);
  border-radius: 0 10px 10px 0;
  font-style: italic;
  font-weight: bold;
  font-size: 16px;
  text-shadow: 1px 1px 1px #1c4a1c;
}

.flag {
  width: 17px;
  height: 17px;
}

.tasks {
  display: flex;
  gap: 1px;
  margin-left: 8px;
  align-items: center;
}

.task {
  width: 119px;
  height: 22px;
  display: flex;
  align-items: center;
  gap: 2px;
  padding-left: 7px;
  border-radius: 3px;
  background: #3d80ee;
  white-space: nowrap;
  overflow: hidden;
}

.task svg {
  width: 16px;
  height: 16px;
  flex: none;
}

.task-on {
  background: #1c49b0;
  box-shadow: inset 1px 1px 2px #10306e;
}

.quick {
  margin-left: auto;
  display: flex;
  align-items: center;
  gap: 3.400px;
  padding-right: 8px;
}

.quick svg {
  width: 15px;
  height: 15px;
}

.tray {
  width: 152px;
  flex: none;
  display: flex;
  align-items: center;
  gap: 1.500px;
  background: linear-gradient(#1a9cf0 0%, #0e86e6 15%, #0e84e0 85%, #0a70cc 100%);
  border-left: 1px solid #0a4aa0;
  position: relative;
  padding-left: 7px;
}

.tray > svg {
  width: 15px;
  height: 15px;
}

.tray-toggle {
  position: absolute;
  left: -7px;
  top: 4px;
  width: 15px;
  height: 15px;
  border-radius: 50%;
  background: #4a96ee;
  border: 1px solid #d6e8fc;
  display: flex;
  align-items: center;
  justify-content: center;
}

.tray-toggle svg {
  width: 6px;
  height: 9px;
}

.clock {
  margin-left: auto;
  padding-right: 15px;
  white-space: nowrap;
}
```
